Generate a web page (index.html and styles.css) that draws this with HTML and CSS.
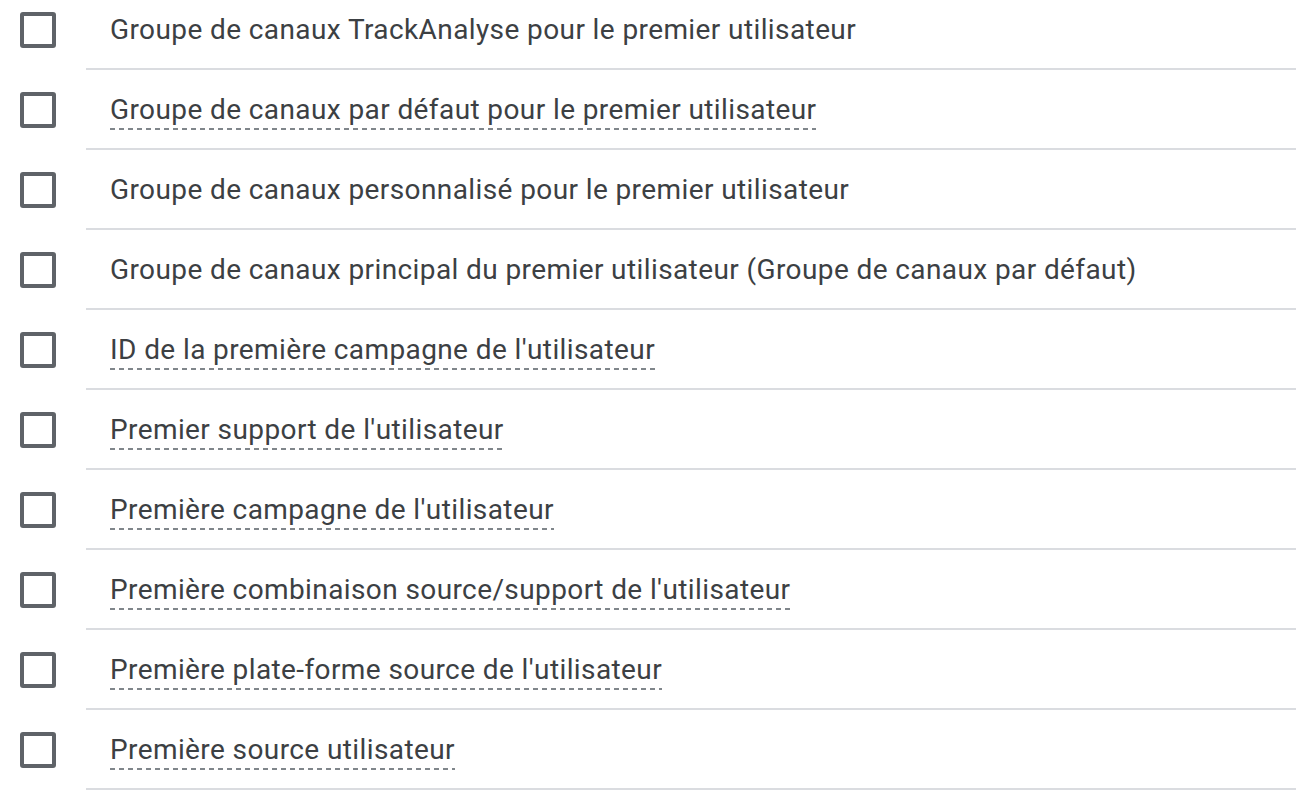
FILE: index.html
```html
<!DOCTYPE html>
<html lang="fr">
<head>
<meta charset="utf-8">
<title>Dimensions</title>
<link rel="stylesheet" href="styles.css">
</head>
<body>
<ul class="list">
  <li class="row"><span class="cb-cell"><span class="cb"></span></span><span class="label"><span class="text">Groupe de canaux TrackAnalyse pour le premier utilisateur</span></span></li>
  <li class="row"><span class="cb-cell"><span class="cb"></span></span><span class="label"><span class="text dashed">Groupe de canaux par défaut pour le premier utilisateur</span></span></li>
  <li class="row"><span class="cb-cell"><span class="cb"></span></span><span class="label"><span class="text">Groupe de canaux personnalisé pour le premier utilisateur</span></span></li>
  <li class="row"><span class="cb-cell"><span class="cb"></span></span><span class="label"><span class="text">Groupe de canaux principal du premier utilisateur (Groupe de canaux par défaut)</span></span></li>
  <li class="row"><span class="cb-cell"><span class="cb"></span></span><span class="label"><span class="text dashed">ID de la première campagne de l'utilisateur</span></span></li>
  <li class="row"><span class="cb-cell"><span class="cb"></span></span><span class="label"><span class="text dashed">Premier support de l'utilisateur</span></span></li>
  <li class="row"><span class="cb-cell"><span class="cb"></span></span><span class="label"><span class="text dashed">Première campagne de l'utilisateur</span></span></li>
  <li class="row"><span class="cb-cell"><span class="cb"></span></span><span class="label"><span class="text dashed">Première combinaison source/support de l'utilisateur</span></span></li>
  <li class="row"><span class="cb-cell"><span class="cb"></span></span><span class="label"><span class="text dashed">Première plate-forme source de l'utilisateur</span></span></li>
  <li class="row"><span class="cb-cell"><span class="cb"></span></span><span class="label"><span class="text dashed">Première source utilisateur</span></span></li>
</ul>
</body>
</html>
```
FILE: styles.css
```css
html, body {
  margin: 0;
  padding: 0;
  background: #ffffff;
}
body {
  font-family: Roboto, "Liberation Sans", sans-serif;
  color: #3c4043;
  overflow: hidden;
}
.list {
  list-style: none;
  margin: -10px 0 0 0;
  padding: 0;
}
.row {
  display: flex;
  height: 80px;
}
.cb-cell {
  width: 86px;
  flex: 0 0 86px;
  display: flex;
  align-items: center;
  padding-left: 20px;
  box-sizing: border-box;
}
.cb {
  width: 36px;
  height: 36px;
  box-sizing: border-box;
  border: 4px solid #5f6368;
  border-radius: 3px;
}
.label {
  flex: 1;
  display: flex;
  align-items: center;
  padding-left: 24px;
  border-bottom: 2px solid #dadce0;
  font-size: 28px;
  letter-spacing: 0.4px;
}
.text {
  line-height: 36px;
  padding-top: 4px;
  padding-bottom: 2px;
}
.dashed {
  background-image: repeating-linear-gradient(to right, #80868b 0 5px, transparent 5px 9px);
  background-size: 100% 2px;
  background-repeat: no-repeat;
  background-position: 0 100%;
}
```
